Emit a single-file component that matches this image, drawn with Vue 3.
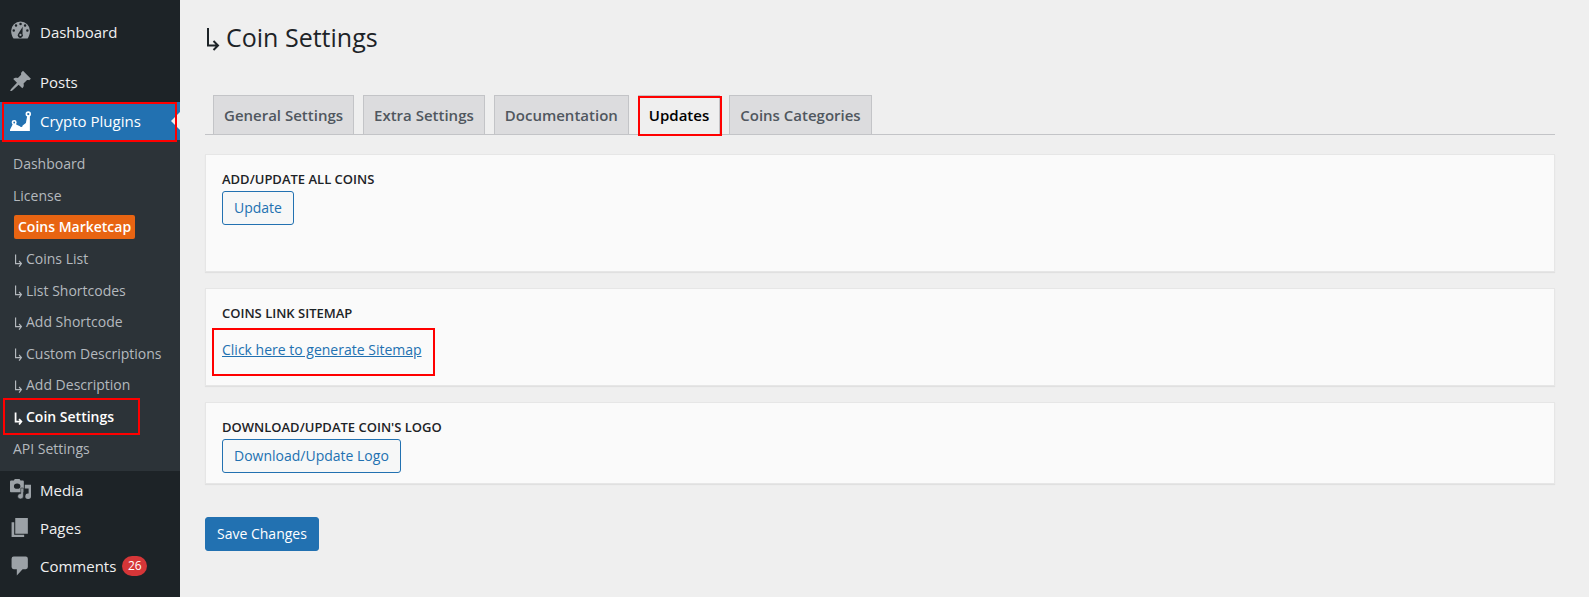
<script setup>
const topItems = [
  { label: 'Dashboard', icon: 'dashboard' },
  { label: 'Posts', icon: 'pin', spaced: true },
  { label: 'Crypto Plugins', icon: 'chart', active: true },
]
const subItems = [
  { label: 'Dashboard' },
  { label: 'License' },
  { label: 'Coins Marketcap', badge: true },
  { label: 'Coins List', nested: true },
  { label: 'List Shortcodes', nested: true },
  { label: 'Add Shortcode', nested: true },
  { label: 'Custom Descriptions', nested: true },
  { label: 'Add Description', nested: true },
  { label: 'Coin Settings', nested: true, current: true },
  { label: 'API Settings' },
]
const bottomItems = [
  { label: 'Media', icon: 'media' },
  { label: 'Pages', icon: 'pages' },
  { label: 'Comments', icon: 'comments', count: 26 },
]
const tabs = ['General Settings', 'Extra Settings', 'Documentation', 'Updates', 'Coins Categories']
const activeTab = 'Updates'
</script>

<template>
  <div class="page">
    <nav class="sidebar" aria-label="Main menu">
      <a
        v-for="item in topItems"
        :key="item.label"
        href="#"
        class="item"
        :class="{ spaced: item.spaced, active: item.active, marked: item.active }"
      >
        <svg v-if="item.icon === 'dashboard'" class="icon" viewBox="0.700 1.300 18.500 18.500" aria-hidden="true">
          <path fill-rule="evenodd" d="M3.800 17.500h12.400c1.200-1.500 2.100-4 2.100-6.500A8.300 8.300 0 0 0 1.700 11c0 2.500.9 5 2.100 6.500zM10 3.700a1.100 1.100 0 1 1 0 2.200 1.100 1.100 0 0 1 0-2.200zM6 5a1.100 1.100 0 1 1 0 2.200A1.100 1.100 0 0 1 6 5zm8 0a1.100 1.100 0 1 1 0 2.200A1.100 1.100 0 0 1 14 5zM4 9.500a1.100 1.100 0 1 1 0 2.200 1.100 1.100 0 0 1 0-2.200zm12 0a1.100 1.100 0 1 1 0 2.200 1.100 1.100 0 0 1 0-2.200zm-4.100-2.200-.2 6.200a2.300 2.300 0 1 1-3.600-.3zM9.900 13.500a1 1 0 1 0 0 2 1 1 0 0 0 0-2z" />
        </svg>
        <svg v-else-if="item.icon === 'pin'" class="icon" viewBox="1 1 17.500 17.500" aria-hidden="true">
          <path d="M10.400 3.020l1.410-1.410 6.590 6.600-1.420 1.410c-.7-.24-1.450-.23-1.980-.08l-2.700 2.740c.45 1.660.17 3.070-1.040 3.950L8.200 13.200l-5 4.600c-.8.6-1.600 1-1.900.7-.2-.3.200-1.100.8-1.800l4.700-5-3.100-3.100c.9-1.200 2.300-1.500 3.860-1.030l2.730-2.700c-.15-.53-.14-1.150.11-1.850z" />
        </svg>
        <svg v-else class="icon" viewBox="1.500 0 18.500 18.500" aria-hidden="true">
          <path d="M1.500 18.500v-1.200l3.300-6.500 2.600 2.100 3.800 1.800 4.300-3.200 1.200-6.500h2.300v13.500z" />
          <circle cx="17.600" cy="3.600" r="1.700" fill="#2271b1" stroke="#fff" stroke-width="1.400" />
          <circle cx="5.200" cy="11" r="1.500" fill="#2271b1" stroke="#fff" stroke-width="1.400" />
          <circle cx="11.500" cy="14" r="1" fill="#2271b1" />
        </svg>
        <span>{{ item.label }}</span>
      </a>

      <ul class="submenu">
        <li v-for="(item, i) in subItems" :key="i">
          <a href="#" class="sub" :class="{ current: item.current, marked: item.current }">
            <svg v-if="item.nested" class="hook" viewBox="0 0 12 22" aria-hidden="true">
              <path d="M1 0v15.500h9.500M7 11l4 4.500-4 5" />
            </svg>
            <span :class="{ badge: item.badge }">{{ item.label }}</span>
          </a>
        </li>
      </ul>

      <a v-for="item in bottomItems" :key="item.label" href="#" class="item">
        <svg v-if="item.icon === 'media'" class="icon" viewBox="0 0 22 22" aria-hidden="true">
          <path fill-rule="evenodd" d="M1.500 2H4l1-2h5l1 2h2.500c.6 0 1 .4 1 1v12.500c0 .6-.4 1-1 1H1.300C.6 16.500 0 16 0 15.300V3.500C0 2.700.7 2 1.500 2zm6 3.500a3.400 3.400 0 1 0 0 6.800 3.400 3.400 0 0 0 0-6.800z" transform="scale(1 .84)" />
          <path d="M15.500 6H22v12a3 2.800 0 1 1-2.500-2.700V10h-4z" />
          <path d="M11.300 9.500h2.700v8.500a3 2.800 0 1 1-2.700-2.700z" stroke="#1d2327" stroke-width="0.600" />
        </svg>
        <svg v-else-if="item.icon === 'pages'" class="icon" viewBox="1 0 20 20" aria-hidden="true">
          <path d="M6 1h12v15H6zM2.500 5H5v12h9.500v2h-12z" />
        </svg>
        <svg v-else class="icon" viewBox="1 0 20 20" aria-hidden="true">
          <path d="M4.500 1.500h11.500a2 2 0 0 1 2 2v8a2 2 0 0 1-2 2h-3L7.500 19.500v-6h-3a2 2 0 0 1-2-2v-8a2 2 0 0 1 2-2z" />
        </svg>
        <span>{{ item.label }}</span>
        <span v-if="item.count" class="count">{{ item.count }}</span>
      </a>
    </nav>

    <main class="content">
      <h1>
        <svg class="hook big" viewBox="0 0 12 22" aria-hidden="true">
          <path d="M1 0v17.500h9.500M6.500 13l4.500 4.500-4.500 4.500" />
        </svg>
        <span>Coin Settings</span>
      </h1>

      <nav class="tabs" aria-label="Settings sections">
        <a
          v-for="tab in tabs"
          :key="tab"
          href="#"
          class="tab"
          :class="{ selected: tab === activeTab, marked: tab === activeTab }"
        >{{ tab }}</a>
      </nav>

      <section class="card tall">
        <h2>Add/Update all coins</h2>
        <button type="button" class="button">Update</button>
      </section>
      <section class="card sitemap">
        <h2>Coins link sitemap</h2>
        <a href="#" class="link marked">Click here to generate Sitemap</a>
      </section>
      <section class="card">
        <h2>Download/Update coin's logo</h2>
        <button type="button" class="button">Download/Update Logo</button>
      </section>

      <button type="submit" class="button primary">Save Changes</button>
    </main>
  </div>
</template>

<style>
body {
  margin: 0;
  background: #efefef;
}
</style>

<style scoped>
.page {
  display: flex;
  min-height: 100vh;
  box-sizing: border-box;
  background: #efefef;
  color: #1d2327;
  font-family: "Open Sans", "Noto Sans", sans-serif;
  font-size: 15px;
}
.sidebar {
  flex: none;
  width: 180px;
  box-sizing: border-box;
  padding-top: 12px;
  background: #1d2327;
}
.item {
  position: relative;
  display: flex;
  align-items: center;
  height: 39px;
  padding-left: 10px;
  color: #f0f0f1;
  text-decoration: none;
  white-space: nowrap;
}
.item.spaced {
  margin-top: 11px;
}
.item.active {
  height: 38px;
  margin-top: 1px;
  background: #2271b1;
  color: #fff;
}
.submenu ~ .item {
  height: 38px;
}
.item.active::before {
  content: "";
  position: absolute;
  right: 0;
  top: 10px;
  border: 9px solid transparent;
  border-left-width: 0;
  border-right-color: #efefef;
}
.icon {
  flex: none;
  width: 21px;
  height: 21px;
  margin: 0 9px 2px 0;
  fill: #9ca2a7;
  overflow: visible;
}
.active .icon {
  fill: #fff;
}
.marked {
  position: relative;
}
.marked::after {
  content: "";
  position: absolute;
  border: 2px solid #f00;
  pointer-events: none;
}
.item.marked::after {
  inset: 0 3px -2px 2px;
}
.submenu {
  display: grid;
  grid-auto-rows: 1fr;
  height: 331px;
  box-sizing: border-box;
  margin: 0;
  padding: 8px 0 7px;
  background: #2c3338;
  list-style: none;
}
.sub {
  display: flex;
  align-items: center;
  height: 100%;
  padding-left: 13px;
  color: #b4b9be;
  font-size: 14px;
  text-decoration: none;
  white-space: nowrap;
}
.sub.current {
  color: #fff;
  font-weight: 600;
}
.sub.marked::after {
  inset: -3px 40px -3px 3px;
}
.hook {
  flex: none;
  width: 7px;
  height: 14px;
  margin: 4px 4px 0 2px;
  fill: none;
  stroke: currentColor;
  stroke-width: 2;
  overflow: visible;
}
.current .hook {
  stroke-width: 3;
}
.badge {
  margin-left: 1px;
  padding: 2px 4px;
  border-radius: 2px;
  background: #e86412;
  color: #fff;
  font-weight: 600;
  line-height: 20px;
}
.count {
  min-width: 25px;
  margin-left: 6px;
  border-radius: 10px;
  background: #d63638;
  color: #fff;
  font-size: 12px;
  line-height: 20px;
  text-align: center;
}
.content {
  flex: 1;
  min-width: 0;
  padding: 17px 34px 0 25px;
}
h1 {
  display: flex;
  align-items: center;
  margin: 0 0 38px;
  font-size: 25px;
  font-weight: 400;
  line-height: 40px;
}
.hook.big {
  width: 12px;
  height: 22px;
  margin: 4px 7px 0 2px;
  stroke-width: 2;
}
.tabs {
  display: flex;
  gap: 9px;
  margin-bottom: 19px;
  padding-left: 8px;
  border-bottom: 1px solid #c3c4c7;
}
.tab {
  padding: 0 10px;
  border: 1px solid #c3c4c7;
  border-bottom: 0;
  background: #dcdcde;
  color: #50575e;
  font-size: 15px;
  font-weight: 600;
  line-height: 38px;
  text-decoration: none;
  white-space: nowrap;
}
.tab.selected {
  margin-bottom: -1px;
  background: #efefef;
  color: #000;
}
.tab.marked::after {
  inset: 0 -3px -1px -1px;
}
.card {
  box-sizing: border-box;
  min-height: 82px;
  margin-bottom: 16px;
  padding: 13px 16px 0;
  border: 1px solid #e6e6e6;
  box-shadow: 0 1px 1px rgba(0, 0, 0, 0.06);
  background: #fafafa;
}
.card.tall {
  min-height: 118px;
}
.card.sitemap {
  min-height: 98px;
}
h2 {
  margin: 0 0 1px;
  font-size: 13px;
  font-weight: 600;
  line-height: 22px;
  text-transform: uppercase;
}
.button {
  display: block;
  height: 34px;
  padding: 0 11px 2px;
  border: 1px solid #2271b1;
  border-radius: 3px;
  background: #f6f7f7;
  color: #2271b1;
  font-family: inherit;
  font-size: 14px;
  white-space: nowrap;
}
.button.primary {
  margin-top: 33px;
  background: #2271b1;
  color: #fff;
}
.link {
  display: inline-block;
  margin-top: 14px;
  color: #2271b1;
  font-size: 14px;
  line-height: 22px;
}
.link.marked::after {
  inset: -11px -13px -15px -10px;
}
</style>
